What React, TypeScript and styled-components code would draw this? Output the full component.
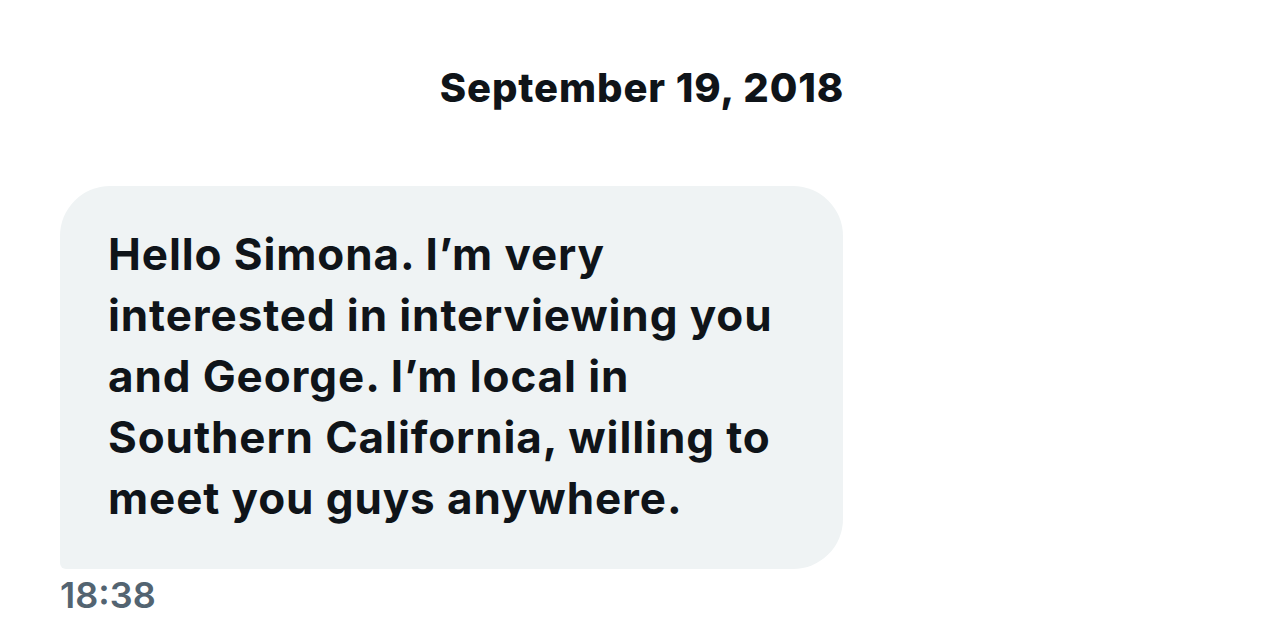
import React from "react";
import styled, { createGlobalStyle } from "styled-components";

const Global = createGlobalStyle`
  html, body { margin: 0; padding: 0; background: #ffffff; }
  body { font-family: Inter, "Noto Sans", sans-serif; color: #0f1419; }
`;

const Page = styled.div`
  width: 1284px;
  height: 633px;
  box-sizing: border-box;
  padding: 61px 60px 0 60px;
  display: flex;
  flex-direction: column;
`;

const DateHeader = styled.div`
  text-align: center;
  font-size: 40px;
  line-height: 54px;
  font-weight: 800;
  letter-spacing: 0.9px;
  color: #0f1419;
`;

const Message = styled.div`
  margin-top: 71px;
  display: flex;
  flex-direction: column;
  align-items: flex-start;
`;

const Bubble = styled.div`
  width: 783px;
  box-sizing: border-box;
  background: #eff3f4;
  border-radius: 50px 50px 50px 6px;
  padding: 38px 48px 40px 48px;
  font-size: 44px;
  line-height: 61px;
  font-weight: 700;
  letter-spacing: 0.9px;
  color: #0f1419;
`;

const Line = styled.div`
  white-space: nowrap;
`;

const Time = styled.div`
  margin-top: 5px;
  font-size: 36px;
  line-height: 42px;
  font-weight: 600;
  color: #536471;
`;

const lines = [
  "Hello Simona. I\u2019m very",
  "interested in interviewing you",
  "and George. I\u2019m local in",
  "Southern California, willing to",
  "meet you guys anywhere.",
];

export default function App() {
  return (
    <>
      <Global />
      <Page>
        <DateHeader>September 19, 2018</DateHeader>
        <Message>
          <Bubble>
            {lines.map((l) => (
              <Line key={l}>{l}</Line>
            ))}
          </Bubble>
          <Time>18:38</Time>
        </Message>
      </Page>
    </>
  );
}
